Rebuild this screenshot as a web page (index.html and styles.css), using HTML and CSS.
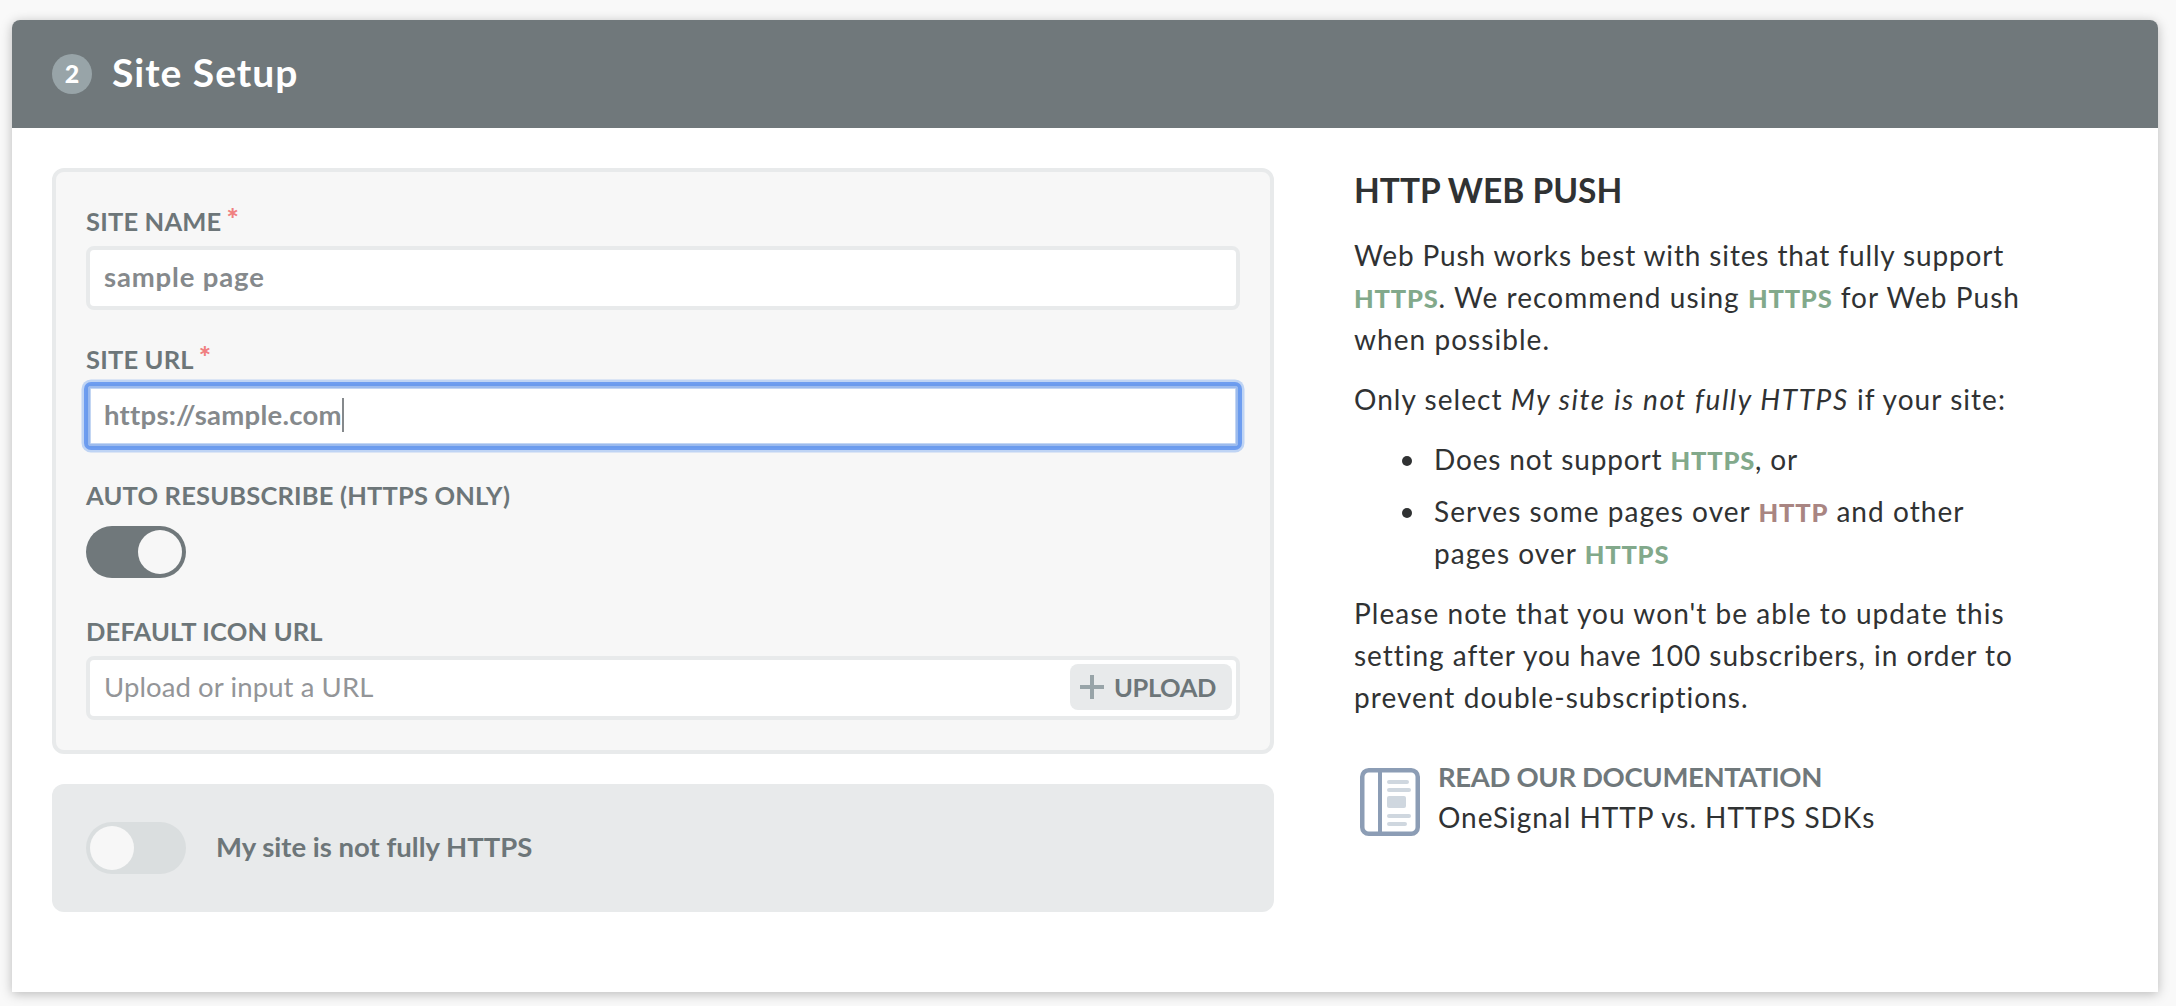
FILE: index.html
```html
<!DOCTYPE html>
<html lang="en">
<head>
<meta charset="utf-8">
<title>Site Setup</title>
<link rel="stylesheet" href="styles.css">
</head>
<body>
<main class="card">
  <header class="card-header">
    <span class="step">2</span>
    <h1 class="title">Site Setup</h1>
  </header>
  <div class="card-body">
    <div class="form">
      <section class="panel">
        <div class="field">
          <div class="label">SITE NAME<span class="required">*</span></div>
          <div class="input value-name">sample page</div>
        </div>
        <div class="field">
          <div class="label">SITE URL<span class="required">*</span></div>
          <div class="input focused">https://sample.com<span class="caret"></span></div>
        </div>
        <div class="field field-toggle">
          <div class="label">AUTO RESUBSCRIBE (HTTPS ONLY)</div>
          <div class="toggle on"><span class="knob"></span></div>
        </div>
        <div class="field">
          <div class="label">DEFAULT ICON URL</div>
          <div class="input with-button">
            <span class="placeholder">Upload or input a URL</span>
            <button class="upload" type="button">
              <svg width="24" height="24" viewBox="0 0 24 24"><path d="M12 0v24M0 12h24" stroke="#98a4a8" stroke-width="4"/></svg>
              <span class="upload-text">UPLOAD</span>
            </button>
          </div>
        </div>
      </section>
      <section class="option">
        <div class="toggle"><span class="knob"></span></div>
        <span class="option-label">My site is not fully HTTPS</span>
      </section>
    </div>
    <aside class="info">
      <h2 class="info-title">HTTP WEB PUSH</h2>
      <p class="text"><span class="snug">Web Push works best with sites that fully support</span><br><b class="secure">HTTPS</b>. We recommend using <b class="secure">HTTPS</b> for Web Push<br>when possible.</p>
      <p class="text">Only select <i class="setting">My site is not fully HTTPS</i> if your site:</p>
      <ul class="list">
        <li class="text snug">Does not support <b class="secure">HTTPS</b>, or</li>
        <li class="text">Serves some pages over <b class="insecure">HTTP</b> and other<br>pages over <b class="secure">HTTPS</b></li>
      </ul>
      <p class="text">Please note that you won't be able to update this<br><span class="snug-note">setting after you have 100 subscribers, in order to</span><br>prevent double-subscriptions.</p>
      <div class="docs">
        <svg class="docs-icon" width="60" height="68" viewBox="0 0 60 68">
          <rect x="2.25" y="2.25" width="55.5" height="63.5" rx="6.5" fill="#fff" stroke="#8c9db5" stroke-width="4.5"/>
          <path d="M20 2v64" stroke="#8c9db5" stroke-width="4"/>
          <g stroke="#cfd7df" stroke-width="4" stroke-linecap="round"><path d="M29 14h18M29 22h20M29 48h20M29 56h16"/></g>
          <rect x="27" y="28" width="19" height="12" rx="2" fill="#cfd7df"/>
        </svg>
        <div>
          <div class="docs-heading">READ OUR DOCUMENTATION</div>
          <div class="docs-link">OneSignal HTTP vs. HTTPS SDKs</div>
        </div>
      </div>
    </aside>
  </div>
</main>
</body>
</html>
```
FILE: styles.css
```css
* { box-sizing: border-box; }

body {
  margin: 0;
  padding: 20px 18px 14px 12px;
  height: 1006px;
  overflow: hidden;
  background: #f9f9f9;
  color: #303233;
  font-family: Lato, "Open Sans", sans-serif;
}

.card {
  height: 972px;
  background: #fff;
  border-radius: 8px 8px 0 0;
  box-shadow: 0 2px 12px rgba(0, 0, 0, .26);
}

.card-header {
  display: flex;
  align-items: center;
  height: 108px;
  padding: 0 40px;
  background: #70787b;
  border-radius: 8px 8px 0 0;
  color: #fff;
}

.step {
  width: 40px;
  height: 40px;
  border-radius: 50%;
  background: #98a4a8;
  font-size: 25px;
  font-weight: 900;
  line-height: 39px;
  text-align: center;
}

.title {
  margin: 0 0 4px 20px;
  font-size: 39px;
  font-weight: 700;
  line-height: 48px;
  letter-spacing: 1px;
}

.card-body {
  display: flex;
  gap: 80px;
  padding: 40px;
}

.form { width: 1222px; }

.panel {
  height: 586px;
  padding: 32px 30px 0;
  border: 4px solid #e8eaeb;
  border-radius: 12px;
  background: #f7f7f7;
}

.field { margin-bottom: 32px; }
.field:nth-child(2) { margin-bottom: 30px; }
.field-toggle { margin-bottom: 36px; }
.field-toggle .label { margin-bottom: 16px; }

.label {
  display: flex;
  height: 32px;
  margin-bottom: 10px;
  padding-top: 1px;
  color: #6d7679;
  font-size: 25.5px;
  font-weight: 700;
  line-height: 32px;
  letter-spacing: .18px;
}

.required {
  margin: -3px 0 0 5px;
  color: #f08080;
  font-size: 29px;
  font-weight: 900;
}

.input {
  display: flex;
  align-items: center;
  height: 64px;
  padding: 0 14px 4px;
  border: 4px solid #e8eaeb;
  border-radius: 8px;
  background: #fff;
  color: #85898c;
  font-size: 27.5px;
  font-weight: 700;
  letter-spacing: .25px;
}

.value-name { letter-spacing: .85px; }

.input.focused {
  padding: 0 16px 4px;
  border: 2px solid #6b9bed;
  border-radius: 5px;
  box-shadow: inset 0 0 0 2px #9cbbee, inset 0 0 0 3px #c3d6f3, 0 0 0 2px #6e9df0, 0 0 0 4.5px #bfd4f4;
}

.caret {
  width: 2px;
  height: 34px;
  margin-top: 2px;
  background: #85898c;
}

.with-button {
  justify-content: space-between;
  padding: 0 4px 2px 14px;
}

.placeholder {
  padding-bottom: 2px;
  color: #939598;
  font-weight: 400;
  letter-spacing: .1px;
}

.upload {
  display: flex;
  align-items: center;
  width: 162px;
  height: 46px;
  padding: 0 10px 0;
  border: 0;
  border-radius: 8px;
  background: #e8eaeb;
  color: #6d7679;
  font: 700 25.5px/32px Lato, sans-serif;
  letter-spacing: -.4px;
}

.upload-text { margin: -1px 0 0 10px; }

.toggle {
  width: 100px;
  height: 52px;
  padding: 4px;
  border-radius: 26px;
  background: #dadedf;
}

.toggle.on {
  display: flex;
  justify-content: flex-end;
  background: #70787b;
}

.knob {
  display: block;
  width: 44px;
  height: 44px;
  border-radius: 50%;
  background: #f7f7f7;
}

.option {
  display: flex;
  align-items: center;
  height: 128px;
  margin-top: 30px;
  padding: 0 34px;
  border-radius: 12px;
  background: #e8eaeb;
}

.option-label {
  margin: -4px 0 0 30px;
  color: #6d7679;
  font-size: 27.5px;
  font-weight: 700;
}

.info { width: 720px; }

.info-title {
  margin: 0;
  padding-top: 1px;
  height: 66px;
  font-size: 33.5px;
  font-weight: 700;
  line-height: 42px;
}

.text {
  margin: 0 0 18px;
  font-size: 28px;
  line-height: 42px;
  letter-spacing: 1.05px;
}

.snug { letter-spacing: .86px; }
.snug-note { letter-spacing: .97px; }
.setting { letter-spacing: 1.6px; }

.secure,
.insecure {
  color: #82a98b;
  font-size: 25.5px;
  font-weight: 900;
  line-height: 1;
  letter-spacing: .8px;
}

.insecure { color: #a98582; }

.list {
  margin: 0;
  padding: 0 0 0 48px;
  list-style: none;
}

.list .text {
  display: grid;
  grid-template-columns: 32px 1fr;
}

.list .text {
  display: block;
  padding-left: 32px;
}

.list .text::before {
  content: "";
  display: inline-block;
  width: 10px;
  height: 10px;
  margin: 0 22px 4px -32px;
  border-radius: 50%;
  background: #303233;
}

.list .text:first-child { margin-bottom: 10px; }

.docs {
  display: flex;
  margin-top: 39px;
}

.docs-icon { margin: 11px 18px 0 6px; }

.docs-heading {
  color: #70787b;
  font-size: 27.5px;
  font-weight: 700;
  line-height: 40px;
  letter-spacing: -.35px;
}

.docs-link {
  font-size: 28px;
  line-height: 40px;
  letter-spacing: .96px;
}
```
